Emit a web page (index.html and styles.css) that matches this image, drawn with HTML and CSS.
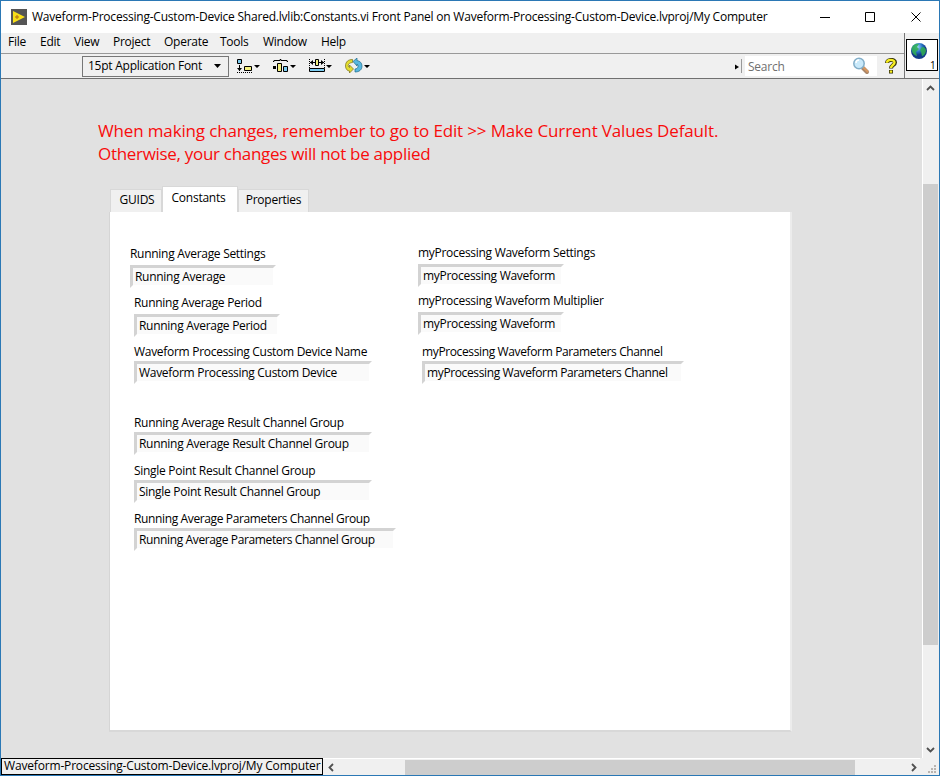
FILE: index.html
```html
<!DOCTYPE html>
<html lang="en">
<head>
<meta charset="utf-8">
<title>Constants.vi Front Panel</title>
<link rel="stylesheet" href="styles.css">
</head>
<body>
<div class="window">
  <header class="titlebar">
    <svg class="app-icon" width="16" height="16" viewBox="0 0 16 16"><path fill="#555" d="M0 0h16v16H0z"/><path fill="#f8df18" d="M2 2l12 6-12 6z"/><path stroke="#b06a10" d="M4 8h4M6 6v4"/></svg>
    <span class="title">Waveform-Processing-Custom-Device Shared.lvlib:Constants.vi Front Panel on Waveform-Processing-Custom-Device.lvproj/My Computer</span>
    <svg class="win-controls" width="106" height="12" viewBox="0 0 106 12" fill="none" stroke="#000"><path d="M0 6.500h10M45.500 1.500h9v9h-9zM91.500 1.500l9 9M100.500 1.500l-9 9"/></svg>
  </header>
  <div class="bars">
    <div class="bars-main">
      <nav class="menu"><span class="m-file">File</span><span class="m-edit">Edit</span><span class="m-view">View</span><span class="m-project">Project</span><span class="m-operate">Operate</span><span class="m-tools">Tools</span><span class="m-window">Window</span><span>Help</span></nav>
      <div class="toolbar">
        <div class="font-select"><span>15pt Application Font</span><svg width="7" height="4" viewBox="0 0 7 4"><path d="M0 0h7L3.500 4z"/></svg></div>
        <svg class="tools" width="136" height="16" viewBox="0 0 136 16">
          <g fill="none" stroke="#000">
            <path fill="#7cccf0" d="M.5 1.500h4v4h-4z"/><path stroke-dasharray="1 1" d="M0 14.500h16"/><path d="M2.500 7v6"/><path fill="#000" stroke="none" d="M0 10h5l-2.500 3z"/><path fill="#f4f080" d="M7.500 8.500h7v4h-7z"/>
            <path d="M36 3.500h1v-1h6v-1h1v1h6v1h1"/><path fill="#000" stroke="none" d="M36 8h3v3h-3z"/><path fill="#f4f080" d="M40.500 5.500h4v8h-4z"/><path fill="#7cccf0" d="M46.500 8.500h4v5h-4z"/>
            <path stroke-dasharray="1 1" d="M72.500 1v9M87.500 1v9"/><path d="M73 4.500h5M82 4.500h5"/><path fill="#000" stroke="none" d="M73 4.500L76 2v5zM87 4.500L84 2v5z"/><path fill="#f4f080" d="M78.500 1.500h3v6h-3z"/><path fill="#7cccf0" d="M72.500 10.500h15v3h-15z"/>
          </g>
          <path d="M17 7h6l-3 3zM53 7h6l-3 3zM89 7h6l-3 3zM127 7h6l-3 3z"/>
          <g stroke-width=".7"><path fill="#e3dc30" stroke="#766f18" d="M115.500 1.500c-4 0-7 2-7 6.500 0 3 2 5 4 5v2l4-4-4-4v2.500c-2-1-2-4.500 3-5z"/><path fill="#58b8df" stroke="#216a8a" d="M116 3.500l4-3.500v2.500c3 .5 5 2.500 5 5.500 0 4-3 6-7 6v-3c3 0 4-3.500 2-5v2z"/></g>
        </svg>
        <svg class="search-handle" width="8" height="15" viewBox="0 0 8 15"><path d="M0 5.500L4 8l-4 2.500z"/><path stroke="#999" d="M6.500 0v14"/></svg>
        <div class="search"><span>Search</span>
          <svg width="18" height="18" viewBox="0 0 18 18"><path stroke="#a9876a" stroke-width="4" stroke-linecap="round" d="M11 11l4 4"/><path stroke="#d89860" stroke-width="2" d="M11 10l5 5"/><circle cx="7" cy="6.500" r="5.200" fill="#c9e9fa" stroke="#83aec8" stroke-width="1.500"/><path fill="none" stroke="#fff" stroke-width="1.500" d="M4 6c0-2 1-3 3-3"/></svg>
        </div>
        <svg class="help" width="12" height="16" viewBox="0 0 12 16" fill="none"><path stroke="#33300a" stroke-width="4" d="M2 5c0-4 8-4 8-.5C10 7 6 7 6 10.500M6 12v3.500"/><path stroke="#f7ee20" stroke-width="2.400" d="M2 4.800c0-4 7.500-3.800 7.500-.3C9.500 7 6 7 6 10M6 12.500v2.300"/></svg>
      </div>
    </div>
    <div class="vi-slot"><div class="vi-icon">
      <svg width="18" height="18" viewBox="0 0 18 18"><defs><radialGradient id="sea" cx=".4" cy=".25"><stop stop-color="#a5dcfa"/><stop offset=".6" stop-color="#2874c8"/><stop offset="1" stop-color="#123c88"/></radialGradient></defs><circle cx="9" cy="9" r="8" fill="url(#sea)"/><path fill="#30b050" fill-opacity=".85" d="M2 5c2-3 5-4 7-3L7 5l2 2-3 3 1 4c-4-1-6-5-5-9zM12 5c3 0 4 2 4 4-1 4-3 5-4 5l-1-4-1-2z"/></svg>
      <span>1</span></div></div>
  </div>
  <div class="workspace">
    <main class="panel">
      <p class="warning"><span class="w1">When making changes, remember to go to Edit &gt;&gt; Make Current Values Default.</span><br><span class="w2">Otherwise, your changes will not be applied</span></p>
      <div class="tabs"><div class="tab guids">GUIDS</div><div class="tab active">Constants</div><div class="tab props">Properties</div></div>
      <section class="page">
        <div class="col left">
          <div class="field outdent"><label>Running Average Settings</label><div class="box small">Running Average</div></div>
          <div class="field"><label>Running Average Period</label><div class="box small">Running Average Period</div></div>
          <div class="field tight"><label>Waveform Processing Custom Device Name</label><div class="box medium">Waveform Processing Custom Device</div></div>
          <div class="field tight group"><label>Running Average Result Channel Group</label><div class="box medium">Running Average Result Channel Group</div></div>
          <div class="field tight spaced"><label>Single Point Result Channel Group</label><div class="box medium">Single Point Result Channel Group</div></div>
          <div class="field tight spaced long"><label>Running Average Parameters Channel Group</label><div class="box large">Running Average Parameters Channel Group</div></div>
        </div>
        <div class="col right">
          <div class="field outdent"><label>myProcessing Waveform Settings</label><div class="box small">myProcessing Waveform</div></div>
          <div class="field outdent close"><label>myProcessing Waveform Multiplier</label><div class="box small">myProcessing Waveform</div></div>
          <div class="field tight last long"><label>myProcessing Waveform Parameters Channel</label><div class="box large">myProcessing Waveform Parameters Channel</div></div>
        </div>
      </section>
    </main>
    <div class="vscroll">
      <svg width="9" height="6" viewBox="0 0 9 6"><path d="M1 5l3.500-3.500L8 5"/></svg>
      <div class="vthumb"></div>
      <svg class="down" width="9" height="6" viewBox="0 0 9 6"><path d="M1 1l3.500 3.500L8 1"/></svg>
    </div>
  </div>
  <footer class="status">
    <div class="project">Waveform-Processing-Custom-Device.lvproj/My Computer</div>
    <div class="hscroll">
      <svg width="6" height="9" viewBox="0 0 6 9"><path d="M5 1L1.500 4.500 5 8"/></svg>
      <div class="hthumb"></div>
      <svg class="next" width="6" height="9" viewBox="0 0 6 9"><path d="M1 1l3.500 3.500L1 8"/></svg>
    </div>
    <svg class="grip" width="8" height="8" viewBox="0 0 8 8"><path fill="#b9b4b0" d="M6 0h2v2H6zM3 3h2v2H3zM6 3h2v2H6zM0 6h2v2H0zM3 6h2v2H3zM6 6h2v2H6z"/></svg>
  </footer>
</div>
</body>
</html>
```
FILE: styles.css
```css
* { box-sizing: border-box; }
body { margin: 0; font: 12px/16px "Open Sans", "Noto Sans", sans-serif; letter-spacing: -0.25px; color: #000; overflow: hidden; }
svg { display: block; flex: none; }
span, label { white-space: nowrap; }
.window { width: 940px; height: 776px; border: 1px solid #2b78b5; display: flex; flex-direction: column; background: #f0f0f0; }
.titlebar { height: 32px; background: #fff; display: flex; align-items: center; padding-left: 10px; flex: none; }
.title { margin-left: 5px; width: 735px; letter-spacing: -0.215px; }
.win-controls { margin-left: 53px; }
.bars { height: 46px; display: flex; flex: none; border-bottom: 1px solid #707070; }
.bars-main { width: 903px; }
.menu { height: 21px; display: flex; align-items: center; padding: 0 0 2px 7px; border-bottom: 1px solid #999; }
.menu span { flex: none; }
.m-file { width: 32px; }
.m-edit { width: 34px; }
.m-view { width: 39px; }
.m-project { width: 51px; }
.m-operate { width: 56px; }
.m-tools { width: 43px; }
.m-window { width: 58px; }
.toolbar { height: 24px; display: flex; align-items: center; padding-left: 81px; }
.font-select { width: 147px; height: 21px; border: 1px solid #777; display: flex; align-items: center; justify-content: space-between; padding: 0 7px 0 5px; }
.tools { margin: 0 0 0 8px; }
.search-handle { margin-left: 362px; }
.search { width: 132px; height: 20px; margin-left: 2px; padding: 2px 7px 0 3px; background: #fff; color: #707070; display: flex; align-items: center; justify-content: space-between; }
.search svg { margin-top: -2px; }
.help { margin-left: 8px; }
.vi-slot { width: 35px; border-left: 1px solid #777; padding: 6px 0 0 1px; }
.vi-icon { width: 32px; height: 32px; border: 1px solid #000; background: #fff; display: flex; padding: 2px 0 0 3px; font-size: 10px; }
.vi-icon span { margin: 16px 0 0 2px; line-height: 14px; }
.workspace { height: 679px; display: flex; flex: none; }
.panel { width: 921px; background: #e1e1e1; padding: 40px 0 0 97px; }
.warning { margin: 0; color: #f80c0c; font-size: 17px; line-height: 23px; }
.w1 { letter-spacing: -0.15px; }
.w2 { letter-spacing: -0.3px; }
.tabs { display: flex; align-items: flex-end; height: 26px; margin: 21px 0 0 12px; }
.tab { height: 23px; background: #f0f0f0; border: 1px solid #d8d8d8; border-bottom: 0; line-height: 20px; text-align: center; }
.guids { width: 52px; padding-left: 2px; }
.active { width: 76px; height: 26px; background: #fff; line-height: 22px; padding-right: 3px; }
.props { width: 71px; }
.page { width: 683px; height: 520px; margin-left: 11px; background: #fff; border: 1px solid #d5d5d5; border-right: 2px solid #ececec; border-bottom: 2px solid #d8d8d8; border-top: 0; display: flex; letter-spacing: -0.29px; }
.col { width: 288px; padding: 34px 0 0 24px; }
.field { margin-top: 7px; }
.field:first-child { margin-top: 0; }
.long { letter-spacing: -0.37px; }
.right { padding-top: 33px; }
.outdent { margin-left: -4px; }
.field label { display: block; height: 16px; }
.box { margin-top: 3px; height: 23px; border: 3px solid; border-color: #d3d3d3 #fff #fff #d3d3d3; background: #fafafa; padding-left: 2px; line-height: 18px; white-space: nowrap; }
.tight .box { margin-top: 1px; }
.group { margin-top: 31px; }
.spaced { margin-top: 8px; }
.close { margin-top: 6px; }
.last { margin-top: 9px; }
.small { width: 146px; }
.medium { width: 238px; }
.large { width: 262px; }
.vscroll { width: 17px; border-left: 1px solid #fff; display: flex; flex-direction: column; align-items: center; padding: 6px 1px 0 0; }
.vscroll svg, .hscroll svg { fill: none; stroke: #505050; stroke-width: 1.8; }
.vthumb { width: 15px; height: 461px; margin-top: 93px; background: #cdcdcd; }
.down { margin-top: 102px; }
.status { height: 17px; display: flex; flex: none; }
.project { width: 322px; border: 1px solid #000; padding-left: 2px; line-height: 14px; white-space: nowrap; letter-spacing: -0.17px; }
.hscroll { width: 597px; display: flex; align-items: center; padding-left: 5px; border-top: 1px solid #fff; }
.hthumb { width: 450px; height: 15px; margin-left: 71px; background: #cdcdcd; }
.next { margin-left: 56px; }
.grip { margin: 7px 0 0 8px; }
```
